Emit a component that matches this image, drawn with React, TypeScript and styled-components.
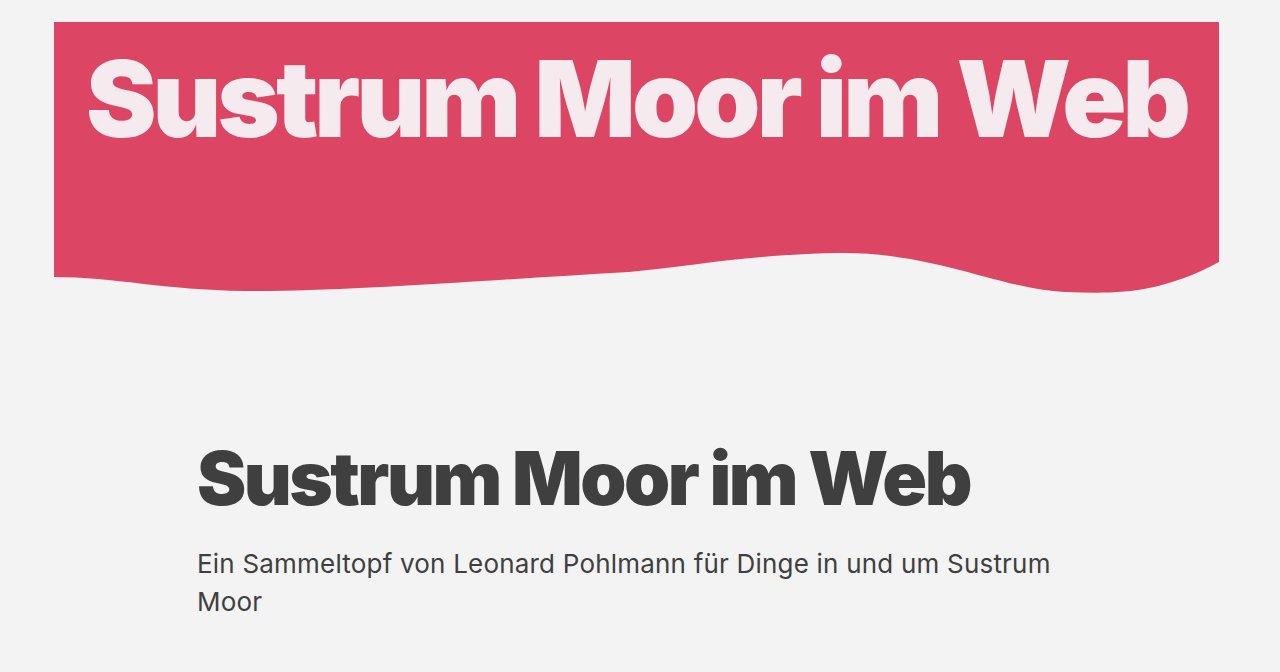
import React from "react";
import styled, { createGlobalStyle } from "styled-components";

const Global = createGlobalStyle`
  html, body { margin: 0; padding: 0; background: #f3f3f3; }
  body { font-family: Inter, "Noto Sans", sans-serif; color: #3f3f3f; }
`;

const Page = styled.div`
  display: flex;
  flex-direction: column;
  padding-top: 22px;
`;

const Banner = styled.header`
  width: 1165px;
  margin-left: 54px;
  display: flex;
  flex-direction: column;
`;

const BannerBody = styled.div`
  background: #dc4563;
  height: 230px;
  display: flex;
  justify-content: center;
`;

const BannerTitle = styled.h1`
  margin: 0;
  padding-top: 13px;
  font-family: Inter, sans-serif;
  font-weight: 900;
  font-size: 106px;
  line-height: 1.2;
  letter-spacing: -0.037em;
  color: #f5eaee;
  white-space: nowrap;
`;

const Wave = styled.svg`
  display: block;
  width: 100%;
  height: 41px;
`;

const Content = styled.main`
  width: 886px;
  margin-left: 197px;
  padding-top: 141px;
`;

const Title = styled.h2`
  margin: 0;
  font-family: Inter, sans-serif;
  font-weight: 900;
  font-size: 74px;
  line-height: 1.2;
  letter-spacing: -0.034em;
  color: #3f3f3f;
`;

const Lead = styled.p`
  margin: 22px 0 0;
  font-family: Inter, sans-serif;
  font-size: 26px;
  line-height: 38px;
  letter-spacing: 0.2px;
  color: #3f3f3f;
  max-width: 870px;
`;

export default function App() {
  return (
    <Page>
      <Global />
      <Banner>
        <BannerBody>
          <BannerTitle>Sustrum Moor im Web</BannerTitle>
        </BannerBody>
        <Wave viewBox="0 0 1165 41" preserveAspectRatio="none">
          <path
            d="M0 0 H1165 V10 C1100 45 1055 41 1011 40 C950 38 880 0 787 1 C700 2 640 14 575 20 C420 29 280 40 191 39 C110 38 60 25 0 25 Z"
            fill="#dc4563"
          />
        </Wave>
      </Banner>
      <Content>
        <Title>Sustrum Moor im Web</Title>
        <Lead>Ein Sammeltopf von Leonard Pohlmann für Dinge in und um Sustrum Moor</Lead>
      </Content>
    </Page>
  );
}
